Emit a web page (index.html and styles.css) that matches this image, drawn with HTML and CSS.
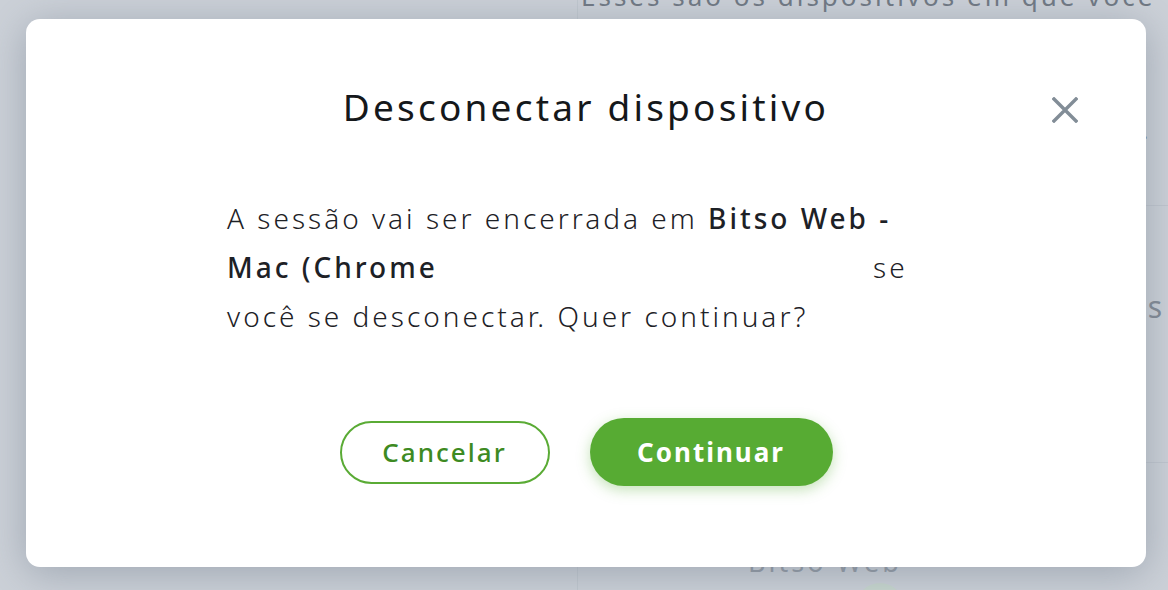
FILE: index.html
```html
<!DOCTYPE html>
<html lang="pt-BR">
<head>
<meta charset="utf-8">
<title>Desconectar dispositivo</title>
<link rel="stylesheet" href="styles.css">
</head>
<body>
<div class="page">
  <div class="col-left"></div>
  <div class="col-right">
    <p class="intro">Esses são os dispositivos em que você</p>
    <div class="row row-a"><span class="dot">·</span></div>
    <div class="row row-b"><span class="side-s">s</span></div>
    <div class="row row-c">
      <span class="device">Bitso Web</span>
      <span class="circle"></span>
    </div>
  </div>
</div>
<div class="backdrop"></div>
<div class="modal" role="dialog" aria-labelledby="modal-title">
  <header class="modal-head">
    <h2 id="modal-title" class="modal-title">Desconectar dispositivo</h2>
    <button class="close" aria-label="Fechar">
      <svg width="26" height="26" viewBox="0 0 26 26"><path d="M2 2 L24 24 M24 2 L2 24" stroke="#828d97" stroke-width="3.4" stroke-linecap="square" fill="none"/></svg>
    </button>
  </header>
  <p class="modal-text">A sessão vai ser encerrada em <strong>Bitso Web - Mac (Chrome</strong><span class="gap"></span> se você se desconectar. Quer continuar?</p>
  <div class="actions">
    <button class="btn btn-outline">Cancelar</button>
    <button class="btn btn-solid">Continuar</button>
  </div>
</div>
</body>
</html>
```
FILE: styles.css
```css
* { box-sizing: border-box; }
html, body { margin: 0; padding: 0; }
body {
  width: 1168px;
  height: 590px;
  overflow: hidden;
  background: #d5d9de;
  font-family: "Noto Sans", "Open Sans", sans-serif;
  position: relative;
}
.page {
  display: flex;
  height: 590px;
  overflow: hidden;
}
.col-left {
  width: 578px;
  border-right: 1px solid #c6ccd2;
}
.col-right {
  flex: 1;
  display: flex;
  flex-direction: column;
  overflow: hidden;
}
.intro {
  margin: -22px 0 0 3px;
  font-size: 26px;
  line-height: 36px;
  letter-spacing: 3px;
  color: #58616b;
  white-space: nowrap;
}
.row { border-bottom: 1px solid #c4cad0; position: relative; }
.row-a { height: 192px; }
.row-b { height: 257px; }
.row-c { flex: 1; border-bottom: 0; overflow: hidden; }
.side-s { position: absolute; right: 6px; top: 80px; font-size: 30px; color: #6c757f; }
.dot { position: absolute; right: 20px; top: 110px; font-size: 20px; color: #6c757f; }
.device {
  position: absolute; left: 170px; top: 80px;
  font-size: 27px; letter-spacing: 3px; color: #838b94;
}
.circle {
  position: absolute; left: 278px; top: 120px;
  width: 48px; height: 48px; border-radius: 50%;
  background: #cfe0d0;
}
.backdrop {
  position: absolute; inset: 0;
  background: rgba(180, 188, 198, 0.25);
}
.modal {
  position: absolute;
  left: 26px; top: 19px;
  width: 1120px; height: 548px;
  background: #fff;
  border-radius: 14px;
  box-shadow: 0 6px 40px rgba(120, 132, 146, 0.55);
  display: flex;
  flex-direction: column;
  align-items: center;
}
.modal-head {
  width: 100%;
  display: flex;
  justify-content: center;
  position: relative;
  padding-top: 63px;
}
.modal-title {
  margin: 0;
  font-size: 37px;
  font-weight: 400;
  color: #15181b;
  line-height: 50px;
  letter-spacing: 3.2px;
}
.close {
  position: absolute;
  right: 66px; top: 76px;
  width: 30px; height: 30px;
  padding: 2px;
  border: 0; background: none;
}
.modal-text {
  margin: 62px 0 0 0;
  width: 718px;
  font-size: 28px;
  font-weight: 300;
  line-height: 49px;
  letter-spacing: 3px;
  color: #1d2126;
}
.modal-text strong { font-weight: 500; }
.gap { display: inline-block; width: 425px; }
.actions {
  margin-top: 77px;
  display: flex;
  gap: 40px;
  align-items: center;
}
.btn {
  font-family: inherit;
  font-size: 26px;
  border-radius: 34px;
  cursor: pointer;
  letter-spacing: 2px;
}
.btn-outline {
  width: 210px; height: 63px;
  border: 2px solid #5aab35;
  background: #fff;
  color: #3d8a22;
  font-weight: 500;
}
.btn-solid {
  width: 243px; height: 68px;
  border: 0;
  background: #57ab33;
  color: #fff;
  font-weight: 700;
  box-shadow: 0 4px 14px rgba(87, 171, 51, 0.35);
}
```
